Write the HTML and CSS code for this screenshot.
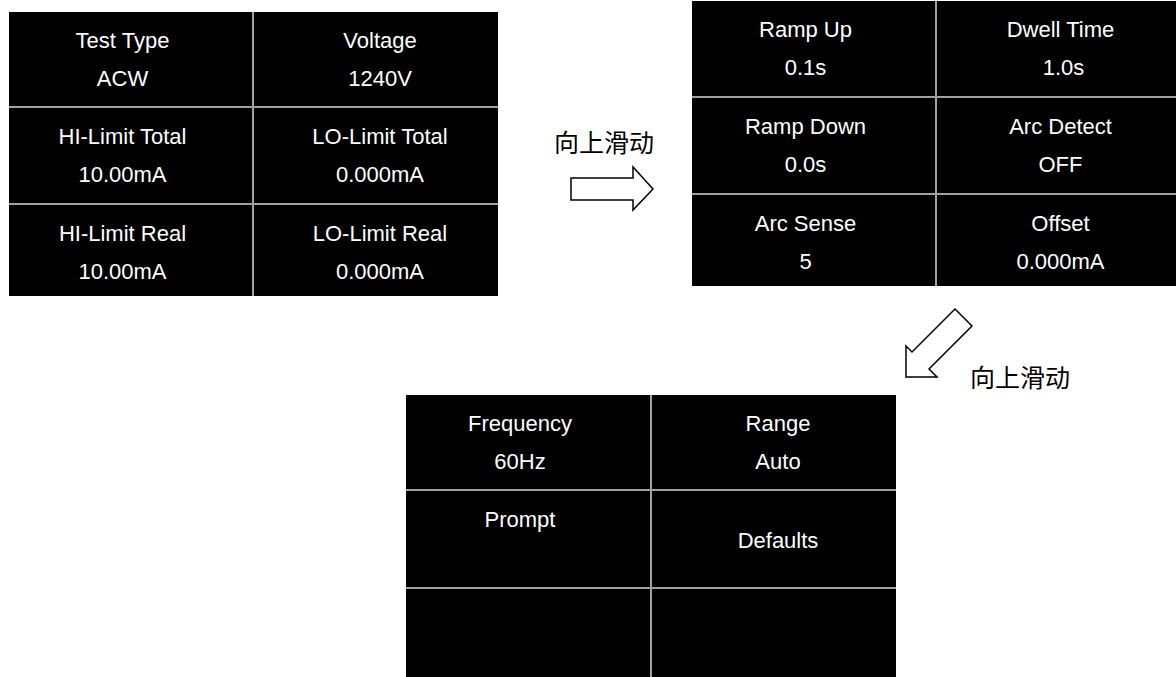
FILE: index.html
```html
<!doctype html>
<html lang="zh-CN">
<head>
    <meta charset="utf-8">
    <meta name="viewport" content="width=device-width, initial-scale=1">
    <title>ACW 参数界面</title>
    <link rel="stylesheet" href="styles.css">
</head>

<body>

    <div class="top">
        <div class="panel p1">
            <div class="cell l"><div>Test Type</div><div>ACW</div></div>
            <div class="cell r"><div>Voltage</div><div>1240V</div></div>
            <div class="cell l"><div>HI-Limit Total</div><div>10.00mA</div></div>
            <div class="cell r"><div>LO-Limit Total</div><div>0.000mA</div></div>
            <div class="cell l"><div>HI-Limit Real</div><div>10.00mA</div></div>
            <div class="cell r"><div>LO-Limit Real</div><div>0.000mA</div></div>
        </div>

        <div class="swipe">
            <div class="cn">向上滑动</div>
            <svg class="arrow-right" width="86" height="47" viewBox="0 0 86 47">
                <polygon points="2,13 64,13 64,2 84,24 64,45 64,35 2,35" />
            </svg>
        </div>

        <div class="panel p2">
            <div class="cell l"><div>Ramp Up</div><div>0.1s</div></div>
            <div class="cell r"><div>Dwell Time</div><div>&nbsp;1.0s</div></div>
            <div class="cell l"><div>Ramp Down</div><div>0.0s</div></div>
            <div class="cell r"><div>Arc Detect</div><div>OFF</div></div>
            <div class="cell l"><div>Arc Sense</div><div>5</div></div>
            <div class="cell r"><div>Offset</div><div>0.000mA</div></div>
        </div>
    </div>

    <div class="middle">
        <svg class="arrow-down" width="67" height="76" viewBox="0 0 67 76">
            <polygon points="55,4 72,21 29,64 37,72 6,72 6,41 12,47" />
        </svg>
        <div class="cn">向上滑动</div>
    </div>

    <div class="panel p3">
        <div class="cell l"><div>Frequency</div><div>60Hz</div></div>
        <div class="cell r"><div>Range</div><div>Auto</div></div>
        <div class="cell l"><div>Prompt</div></div>
        <div class="cell r mid"><div>Defaults</div></div>
        <div class="cell l"></div>
        <div class="cell r"></div>
    </div>

</body>

</html>
```

FILE: styles.css
```css
html {
    width: 100%;
    height: 100%;
}

body {
    margin: 0;
    height: 677px;
    overflow: hidden;
    background-color: #fff;
    color: #000;
    font-family: 'Liberation Sans', Arial, sans-serif;
}

.top {
    display: flex;
    align-items: flex-start;
}

.panel {
    display: grid;
    gap: 2px;
    background-color: #a0a0a0;
}

.p1 {
    margin-top: 12px;
    margin-left: 9px;
    grid-template-columns: 243px 244px;
    grid-template-rows: 94px 95px 91px;
}

.p2 {
    margin-top: 1px;
    grid-template-columns: 243px 239px;
    grid-template-rows: 95px 95px 91px;
}

.p3 {
    width: 490px;
    margin-left: 406px;
    grid-template-columns: 244px 244px;
    grid-template-rows: 94px 96px 88px;
}

.cell {
    padding-top: 10px;
    background-color: #000;
    color: #fff;
    font-size: 22px;
    line-height: 38px;
    text-align: center;
}

.cell.l {
    padding-right: 16px;
}

.cell.r {
    padding-left: 8px;
}

.cell.mid {
    display: flex;
    align-items: center;
    justify-content: center;
    padding-top: 4px;
}

.cn {
    font-family: 'Noto Sans CJK SC', sans-serif;
    font-size: 25px;
    line-height: 30px;
    color: #000;
}

.swipe {
    width: 194px;
    flex-shrink: 0;
    padding-top: 126px;
}

.swipe .cn {
    margin-left: 56px;
}

.arrow-right {
    display: block;
    margin-top: 9px;
    margin-left: 71px;
}

.middle {
    display: flex;
    height: 99px;
    padding-left: 900px;
}

.arrow-down {
    display: block;
    margin-top: 9px;
    overflow: visible;
}

.middle .cn {
    align-self: flex-end;
    margin-left: 3px;
    margin-bottom: 4px;
}

svg polygon {
    fill: #fff;
    stroke: #000;
    stroke-width: 1.5;
    stroke-linejoin: miter;
}
```
